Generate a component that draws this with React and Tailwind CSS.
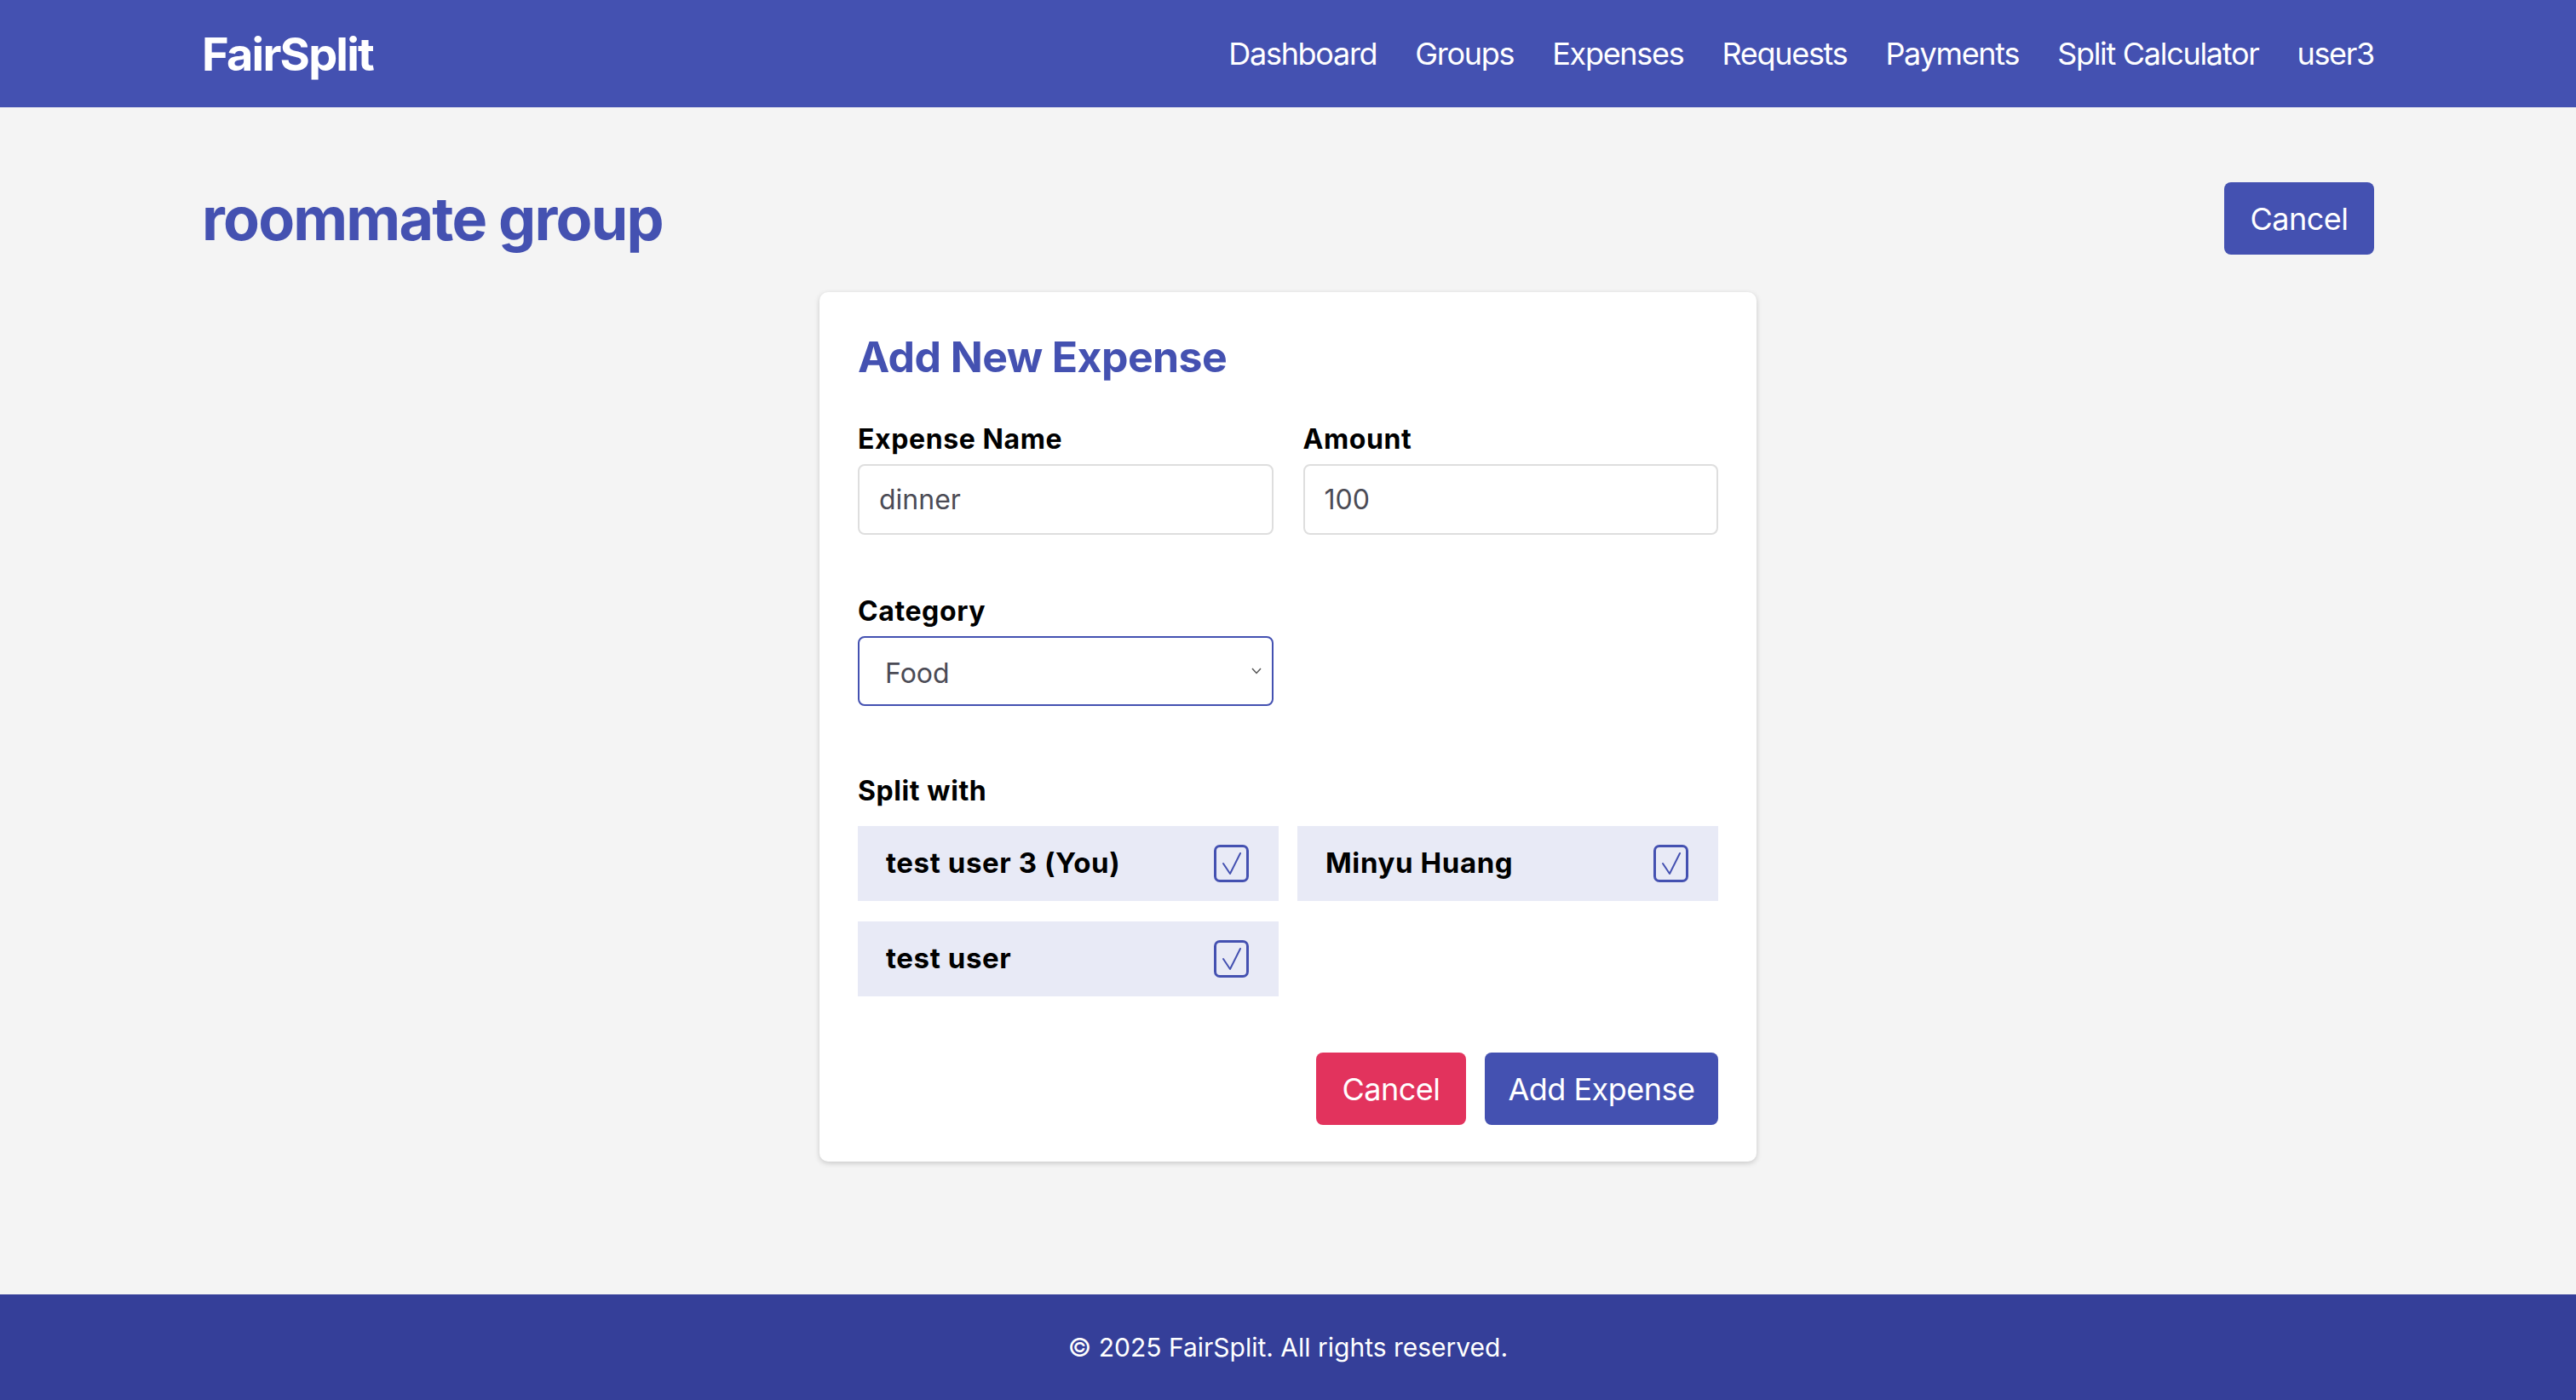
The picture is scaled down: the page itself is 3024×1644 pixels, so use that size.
import React from 'react'

const members = [
  { name: 'test user 3 (You)' },
  { name: 'Minyu Huang' },
  { name: 'test user' },
]

const navLinks = ['Dashboard', 'Groups', 'Expenses', 'Requests', 'Payments', 'Split Calculator', 'user3']

const CheckBox = () => (
  <span className="relative w-[41px] h-[44px] rounded-[7px] border-[3px] border-[#4451B1] bg-transparent">
    <svg className="absolute inset-0" width="35" height="38" viewBox="0 0 35 38" fill="none">
      <path d="M8 19 L16 31 L28 7" stroke="#4451B1" strokeWidth="2" strokeLinecap="round" strokeLinejoin="round" />
    </svg>
  </span>
)

const App = () => {
  return (
    <div
      className="min-h-screen flex flex-col bg-[#f4f4f4]"
      style={{ fontFamily: 'Inter, "Noto Sans", sans-serif' }}
    >
      {/* Navbar */}
      <header className="h-[126px] bg-[#4451B1] shrink-0">
        <div className="w-[2550px] mx-auto h-full flex items-center justify-between">
          <span className="text-[54px] font-bold text-white tracking-[-1.8px]">FairSplit</span>
          <nav className="flex items-center gap-[45px]">
            {navLinks.map((link) => (
              <a key={link} className="text-[36px] text-white leading-none tracking-[-1.3px]">
                {link}
              </a>
            ))}
          </nav>
        </div>
      </header>

      {/* Main */}
      <main className="flex-1">
        <div className="w-[2550px] mx-auto pt-[88px]">
          <div className="flex items-center justify-between">
            <h1 className="text-[70px] font-bold text-[#4451B1] leading-[85px] tracking-[-1.8px]">roommate group</h1>
            <button className="h-[85px] w-[176px] rounded-[8px] bg-[#4451B1] text-white text-[36px] tracking-[-0.5px]">
              Cancel
            </button>
          </div>

          {/* Expense form card */}
          <div className="w-[1100px] mx-auto mt-[44px] bg-white rounded-[10px] shadow-[0_2px_6px_rgba(0,0,0,0.18)] px-[45px] pt-[46px] pb-[43px]">
            <h2 className="text-[50px] leading-[60px] font-bold text-[#4451B1] tracking-[-0.6px]">Add New Expense</h2>

            <div className="grid grid-cols-2 gap-x-[35px] mt-[43px]">
              <div>
                <label className="block text-[32px] leading-[48px] font-bold text-black mb-[5px] tracking-[0.6px]">Expense Name</label>
                <div className="h-[83px] rounded-[8px] border-2 border-[#dedede] flex items-center px-[23px] text-[32px] text-[#4b4b55]">
                  dinner
                </div>
              </div>
              <div>
                <label className="block text-[32px] leading-[48px] font-bold text-black mb-[5px] tracking-[0.6px]">Amount</label>
                <div className="h-[83px] rounded-[8px] border-2 border-[#dedede] flex items-center px-[23px] text-[32px] text-[#4b4b55]">
                  100
                </div>
              </div>
            </div>

            <div className="mt-[66px] w-[488px]">
              <label className="block text-[32px] leading-[48px] font-bold text-black mb-[5px] tracking-[0.6px]">Category</label>
              <div className="relative h-[82px] rounded-[8px] border-2 border-[#4451B1] flex items-center pl-[30px] pt-[6px] text-[32px] text-[#4b4b55]">
                Food
                <svg className="absolute right-[12px] top-[35px]" width="12" height="8" viewBox="0 0 12 8" fill="none">
                  <path d="M1 1 L6 6.5 L11 1" stroke="#555" strokeWidth="1.5" />
                </svg>
              </div>
            </div>

            <div className="mt-[76px]">
              <label className="block text-[32px] leading-[48px] font-bold text-black tracking-[0.6px]">Split with</label>
              <div className="grid grid-cols-2 gap-x-[22px] gap-y-[24px] mt-[17px]">
                {members.map((m) => (
                  <div
                    key={m.name}
                    className="h-[88px] bg-[#e8eaf6] flex items-center justify-between pl-[33px] pr-[35px]"
                  >
                    <span className="text-[33px] font-bold text-black tracking-[0.6px]">{m.name}</span>
                    <CheckBox />
                  </div>
                ))}
              </div>
            </div>

            <div className="flex justify-end gap-[22px] mt-[66px]">
              <button className="h-[85px] w-[176px] rounded-[8px] bg-[#E2335D] text-white text-[36px] tracking-[-0.5px]">
                Cancel
              </button>
              <button className="h-[85px] w-[274px] rounded-[8px] bg-[#4451B1] text-white text-[36px] tracking-[-0.5px]">
                Add Expense
              </button>
            </div>
          </div>
        </div>
      </main>

      {/* Footer */}
      <footer className="h-[124px] bg-[#353F99] flex items-center justify-center shrink-0">
        <p className="text-[30px] text-white">© 2025 FairSplit. All rights reserved.</p>
      </footer>
    </div>
  )
}

export default App
